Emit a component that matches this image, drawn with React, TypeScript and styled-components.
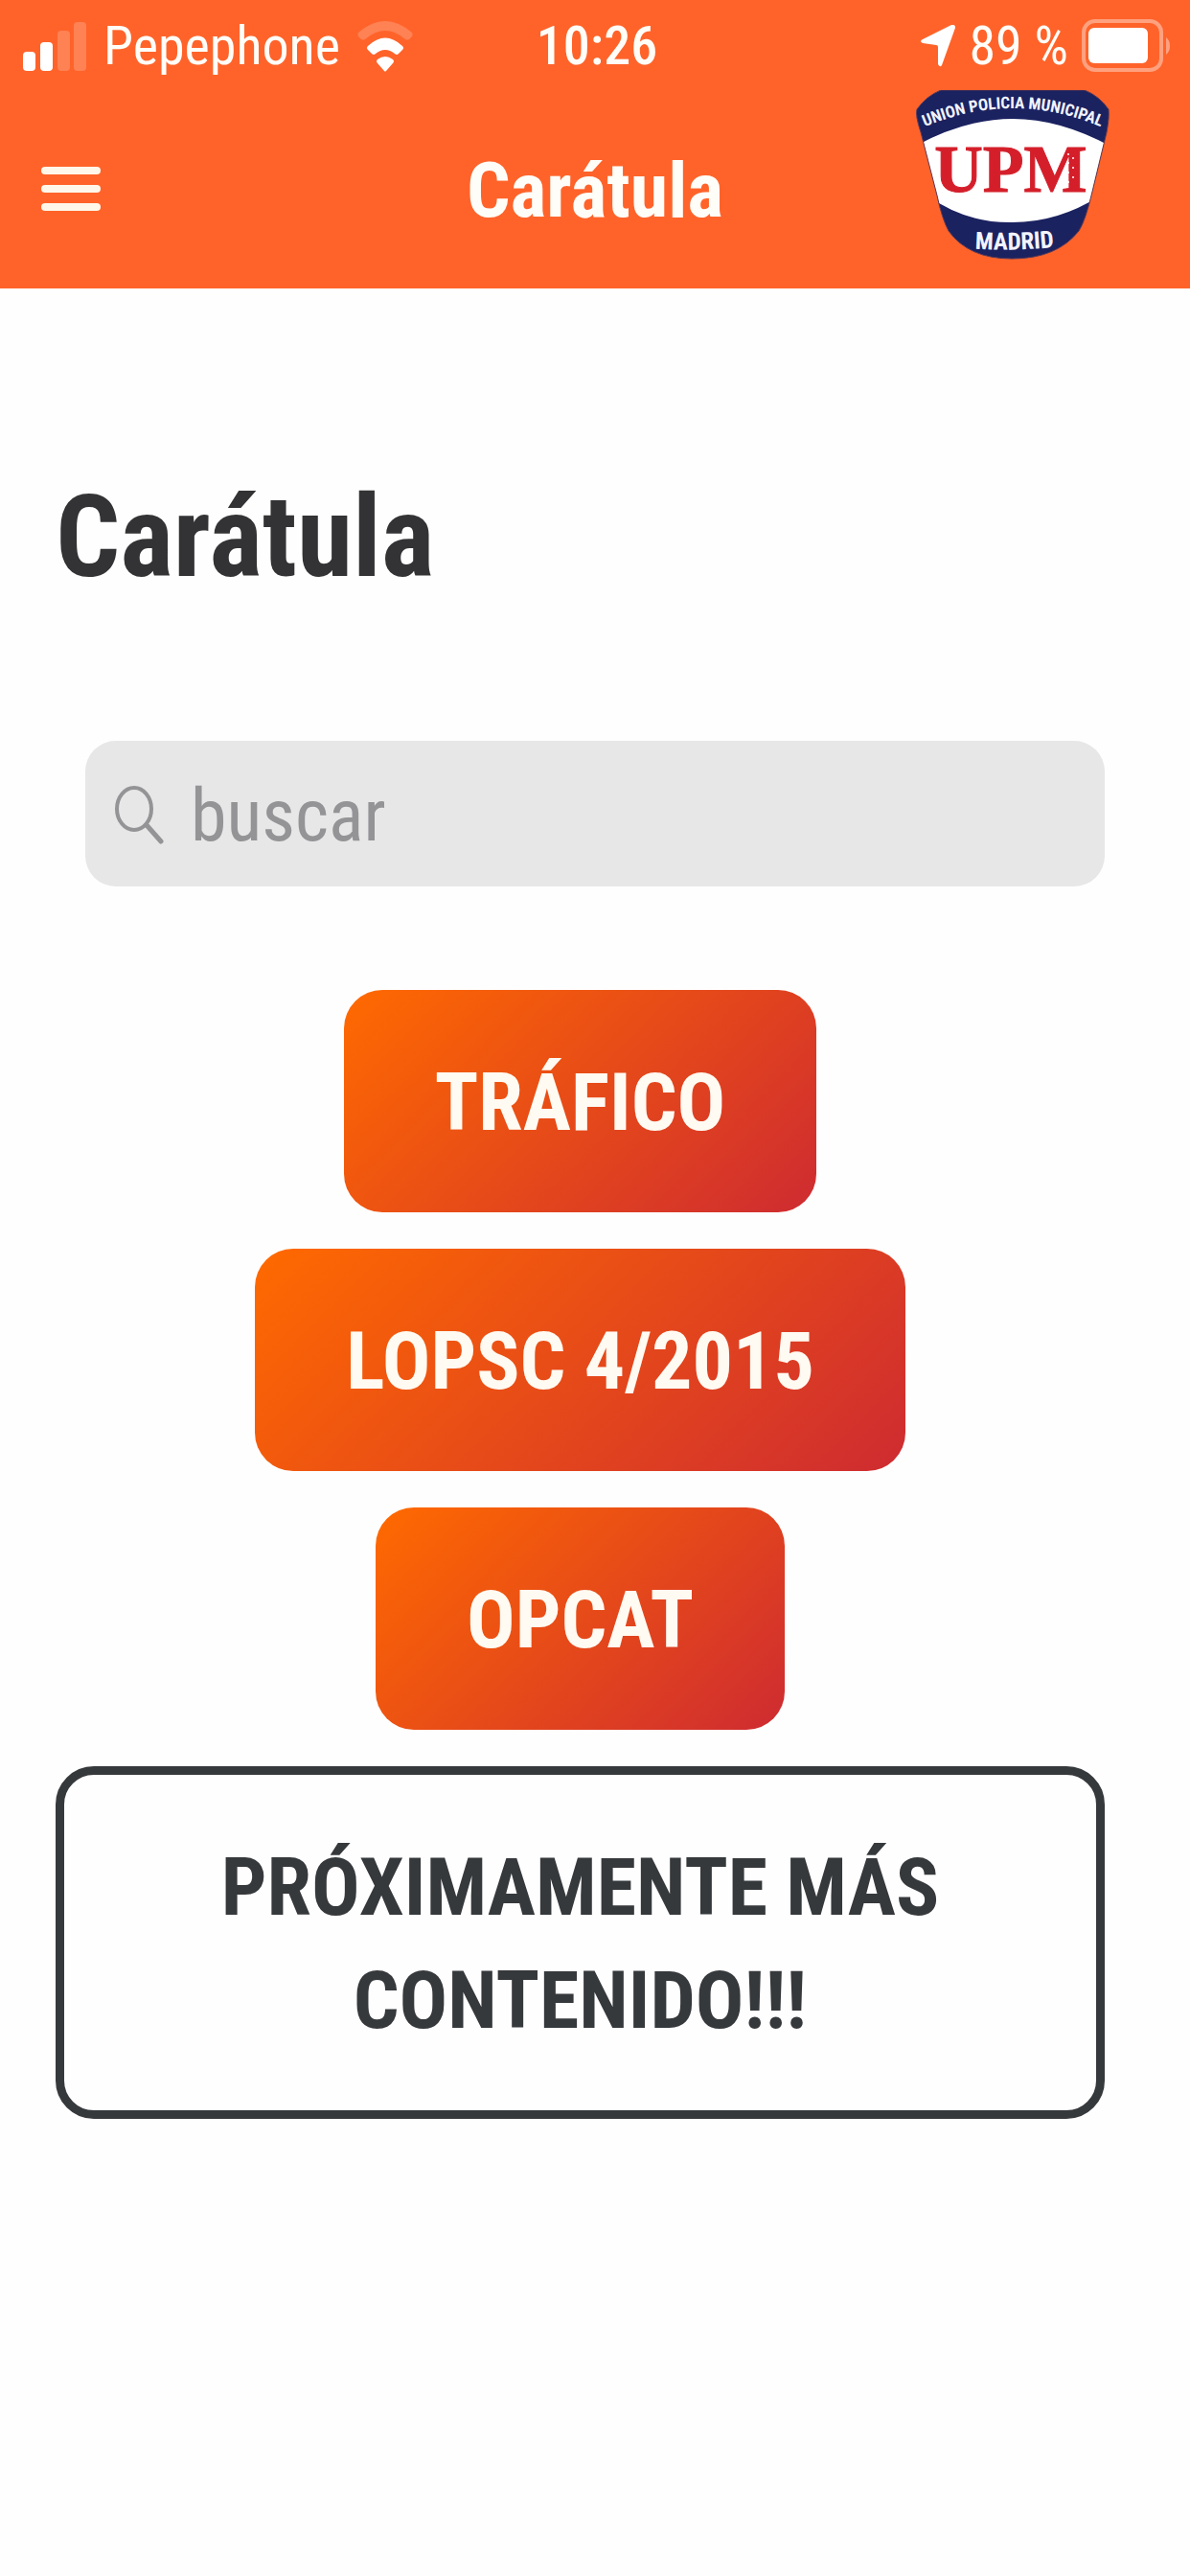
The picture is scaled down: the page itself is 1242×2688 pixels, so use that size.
import { useState } from "react";
import styled, { createGlobalStyle } from "styled-components";

const GlobalStyle = createGlobalStyle`
    * {
        box-sizing: border-box;
    }
    body {
        margin: 0;
        background-color: #fefefe;
        font-family: "Roboto Condensed", Roboto, sans-serif;
    }
`;

const Header = styled.header`
    background-color: #ff632a;
    color: #fffdf8;
    padding-bottom: 1px;
`;

const StatusBar = styled.div`
    display: grid;
    grid-template-columns: 1fr auto 1fr;
    align-items: center;
    height: 94px;
    padding: 2px 20px 0 24px;
    font-size: 56px;
    line-height: 92px;
`;

const StatusGroup = styled.div<{ $end?: boolean }>`
    display: flex;
    align-items: center;
    justify-content: ${(props) => (props.$end ? "flex-end" : "flex-start")};
    gap: ${(props) => (props.$end ? "14px" : "18px")};
    white-space: nowrap;
`;

const Time = styled.time`
    font-weight: 500;
`;

const Nav = styled.nav`
    display: grid;
    grid-template-columns: 1fr auto 1fr;
    align-items: center;
    height: 206px;
    padding: 0 83px 0 43px;
`;

const MenuButton = styled.button`
    display: flex;
    flex-direction: column;
    justify-content: space-between;
    width: 62px;
    height: 46px;
    padding: 0;
    border: none;
    background: none;
    cursor: pointer;
`;

const MenuLine = styled.span`
    height: 8px;
    border-radius: 4px;
    background-color: #fff8ea;
`;

const NavTitle = styled.span`
    padding: 4px 0 0 40px;
    font-size: 80px;
    font-weight: 700;
    line-height: 96px;
`;

const LogoLink = styled.a`
    display: block;
    align-self: start;
    justify-self: end;
    line-height: 0;
`;

const Main = styled.main`
    padding: 192px 89px 96px 58px;
`;

const Title = styled.h1`
    margin: 0;
    color: #333335;
    font-size: 118px;
    font-weight: 700;
    line-height: 136px;
`;

const SearchBox = styled.label`
    display: flex;
    align-items: center;
    gap: 28px;
    height: 152px;
    margin: 144px 0 108px 31px;
    padding: 4px 30px 0;
    border-radius: 32px;
    background-color: #e7e7e8;
`;

const SearchInput = styled.input`
    flex: 1;
    min-width: 0;
    padding: 0;
    border: none;
    outline: none;
    background: none;
    color: #333335;
    font-family: inherit;
    font-size: 76px;

    &::placeholder {
        color: #949496;
        opacity: 1;
    }
`;

const ButtonList = styled.div`
    display: flex;
    flex-direction: column;
    align-items: center;
    gap: 38px;
`;

const GradientButton = styled.button`
    padding: 59px 95px 55px;
    border: none;
    border-radius: 40px;
    background: linear-gradient(135deg, #ff6a00 0%, #ce2b31 100%);
    color: #fffaf2;
    font-family: inherit;
    font-size: 84px;
    font-weight: 700;
    line-height: 118px;
    cursor: pointer;
`;

const OutlineButton = styled(GradientButton)`
    width: 100%;
    border: 9px solid #36393c;
    background: none;
    color: #36393c;
`;

function SignalIcon() {
    return (
        <svg width="66" height="52" viewBox="0 0 66 52" fill="#fff" aria-hidden="true">
            <rect x="0" y="32" width="13" height="20" rx="4" />
            <rect x="18" y="22" width="13" height="30" rx="4" />
            <rect x="36" y="10" width="13" height="42" rx="4" opacity="0.2" />
            <rect x="53" y="1" width="13" height="51" rx="4" opacity="0.2" />
        </svg>
    );
}

function WifiIcon() {
    return (
        <svg width="58" height="54" viewBox="0 0 58 54" aria-hidden="true">
            <path
                d="M1 13Q29 -11 57 13Q58 15 57 17L54 20Q52 21 50 20Q29 2 8 20Q6 21 4 20L1 17Q0 15 1 13Z"
                fill="#fff"
                opacity="0.2"
            />
            <path
                d="M11 27Q29 10 47 27Q49 29 47 31L43 35Q41 37 39 35Q29 27 19 35Q17 37 15 35L11 31Q9 29 11 27Z"
                fill="#fff"
            />
            <path d="M21 41Q29 35 37 41Q39 43 37 45L30 53Q29 54 28 53L21 45Q19 43 21 41Z" fill="#fff" />
        </svg>
    );
}

function LocationIcon() {
    return (
        <svg width="36" height="46" viewBox="0 0 36 46" aria-hidden="true">
            <path
                d="M34 1Q36 1 36 4L22 43Q20 46 18 42V24Q18 22 16 22L2 20Q-2 18 2 16L32 1Z"
                fill="#fff"
            />
        </svg>
    );
}

function BatteryIcon() {
    return (
        <svg width="93" height="56" viewBox="0 0 93 56" fill="none" aria-hidden="true">
            <rect
                x="2"
                y="2"
                width="81"
                height="51"
                rx="12"
                stroke="#fff"
                strokeOpacity="0.4"
                strokeWidth="4"
            />
            <rect x="7" y="9" width="62" height="37" rx="6" fill="#fff" />
            <path d="M88 19Q92 22 92 28T88 37Z" fill="#fff" fillOpacity="0.4" />
        </svg>
    );
}

function SearchIcon() {
    return (
        <svg
            width="52"
            height="62"
            viewBox="0 0 52 62"
            fill="none"
            stroke="#949496"
            strokeLinecap="round"
            aria-hidden="true"
        >
            <ellipse cx="21" cy="24" rx="18" ry="22" strokeWidth="4" />
            <path d="M34 41L49 58" strokeWidth="5" />
        </svg>
    );
}

const stars = [
    [176, 81],
    [181, 85],
    [176, 90],
    [181, 95],
    [176, 100],
    [181, 105],
    [176, 110],
];

function Logo() {
    return (
        <svg width="204" height="178" viewBox="16 14 204 178" role="img" aria-label="UPM">
            <defs>
                <clipPath id="shield">
                    <path d="M43 14H193Q208 20 218 34Q219 42 216 58L201 120Q194 150 187 161Q164 190 117 190Q72 190 51 161Q44 148 39 124L22 58Q16 40 18 34Q28 20 43 14Z" />
                </clipPath>
                <path id="topArc" d="M22 54Q118 12 214 54" />
                <path id="bottomArc" d="M70 179Q118 183 170 177" />
            </defs>
            <g clipPath="url(#shield)">
                <rect x="16" y="14" width="204" height="178" fill="#fff" />
                <path d="M10 14H226V76Q170 44 118 44Q66 44 10 76Z" fill="#1b2260" />
                <path d="M30 125Q70 153 118 152Q165 152 208 125V195H30Z" fill="#1b2260" />
            </g>
            <path
                d="M43 14H193Q208 20 218 34Q219 42 216 58L201 120Q194 150 187 161Q164 190 117 190Q72 190 51 161Q44 148 39 124L22 58Q16 40 18 34Q28 20 43 14Z"
                fill="none"
                stroke="#5a3550"
                strokeWidth="1"
            />
            <text
                fill="#f2f4ff"
                fontFamily="'Roboto Condensed', sans-serif"
                fontSize="17"
                fontWeight="700"
                textAnchor="middle"
            >
                <textPath href="#topArc" startOffset="50%">
                    UNION POLICIA MUNICIPAL
                </textPath>
            </text>
            <text
                x="116"
                y="120"
                fill="#d41f2b"
                stroke="#d41f2b"
                strokeWidth="1"
                fontFamily="'Liberation Serif', serif"
                fontSize="70"
                fontWeight="700"
                textAnchor="middle"
            >
                UPM
            </text>
            {stars.map(([x, y]) => (
                <circle key={`${x}-${y}`} cx={x} cy={y} r="1" fill="#fff" />
            ))}
            <text
                fill="#f2f4ff"
                fontFamily="'Roboto Condensed', sans-serif"
                fontSize="25"
                fontWeight="700"
                textAnchor="middle"
            >
                <textPath href="#bottomArc" startOffset="50%">
                    MADRID
                </textPath>
            </text>
        </svg>
    );
}

const sections = ["TRÁFICO", "LOPSC 4/2015", "OPCAT"];

export default function App() {
    const [search, setSearch] = useState("");

    return (
        <>
            <GlobalStyle />
            <Header>
                <StatusBar>
                    <StatusGroup>
                        <SignalIcon />
                        <span>Pepephone</span>
                        <WifiIcon />
                    </StatusGroup>
                    <Time>10:26</Time>
                    <StatusGroup $end>
                        <LocationIcon />
                        <span>89 %</span>
                        <BatteryIcon />
                    </StatusGroup>
                </StatusBar>
                <Nav>
                    <MenuButton type="button" aria-label="Menú">
                        <MenuLine />
                        <MenuLine />
                        <MenuLine />
                    </MenuButton>
                    <NavTitle>Carátula</NavTitle>
                    <LogoLink href="#">
                        <Logo />
                    </LogoLink>
                </Nav>
            </Header>
            <Main>
                <Title>Carátula</Title>
                <SearchBox>
                    <SearchIcon />
                    <SearchInput
                        type="text"
                        placeholder="buscar"
                        aria-label="buscar"
                        value={search}
                        onChange={(e) => setSearch(e.target.value)}
                    />
                </SearchBox>
                <ButtonList>
                    {sections.map((section) => (
                        <GradientButton key={section} type="button">
                            {section}
                        </GradientButton>
                    ))}
                    <OutlineButton type="button">
                        PRÓXIMAMENTE MÁS CONTENIDO!!!
                    </OutlineButton>
                </ButtonList>
            </Main>
        </>
    );
}
